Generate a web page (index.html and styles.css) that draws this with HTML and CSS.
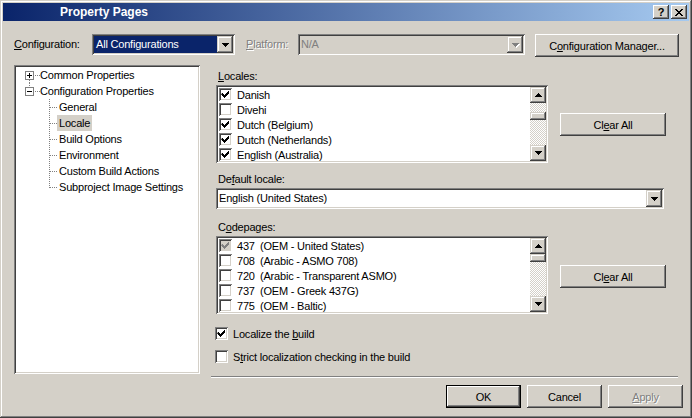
FILE: index.html
```html
<!DOCTYPE html>
<html>
<head>
  <title>Property Pages</title>
  <meta charset="utf-8">
  <link rel="stylesheet" href="styles.css">
</head>
<body>
  <svg width="0" height="0" class="defs">
    <symbol id="chk" viewBox="0 0 13 13"><path d="M3 5h1v1h1v1h1v-1h1v-1h1v-1h1v-1h1v3h-1v1h-1v1h-1v1h-1v1h-1v-1h-1v-1h-1v-1h-1z"/></symbol>
    <symbol id="up" viewBox="0 0 7 4"><path d="M3 0h1v1h-1zM2 1h3v1h-3zM1 2h5v1h-5zM0 3h7v1h-7z"/></symbol>
    <symbol id="down" viewBox="0 0 7 4"><path d="M0 0h7v1h-7zM1 1h5v1h-5zM2 2h3v1h-3zM3 3h1v1h-1z"/></symbol>
  </svg>

  <div class="window">
    <div class="titlebar">
      <span class="title">Property Pages</span>
      <span class="cap-btns">
        <span class="cap-btn help">?</span>
        <span class="cap-btn"><svg width="8" height="7"><path d="M0 0h2v1h-2zM6 0h2v1h-2zM1 1h2v1h-2zM5 1h2v1h-2zM2 2h4v1h-4zM3 3h2v1h-2zM2 4h4v1h-4zM1 5h2v1h-2zM5 5h2v1h-2zM0 6h2v1h-2zM6 6h2v1h-2z"/></svg></span>
      </span>
    </div>

    <div class="config-row">
      <span class="lbl cfg-lbl"><u>C</u>onfiguration:</span>
      <div class="combo cfg-combo">
        <span class="combo-text selected">All Configurations</span>
        <span class="drop"><svg width="7" height="4"><use href="#down"/></svg></span>
      </div>
      <span class="lbl plat-lbl disabled"><u>P</u>latform:</span>
      <div class="combo plat-combo off">
        <span class="combo-text">N/A</span>
        <span class="drop"><svg width="7" height="4"><use href="#down"/></svg></span>
      </div>
      <button class="btn cfg-mgr">C<u>o</u>nfiguration Manager...</button>
    </div>

    <div class="main">
      <div class="tree">
        <div class="node">
          <svg class="gut" width="24" height="16">
            <path class="dots" d="M13.5 13v3M19 8.5h5"/>
            <rect x="9.5" y="4.5" width="8" height="8" fill="#fff" stroke="#808080"/>
            <path d="M11 8.5h5M13.5 6v5" stroke="#000"/>
          </svg>
          <span class="node-text">Common Properties</span>
        </div>
        <div class="node">
          <svg class="gut" width="24" height="16">
            <path class="dots" d="M13.5 0v4M19 8.5h5"/>
            <rect x="9.5" y="4.5" width="8" height="8" fill="#fff" stroke="#808080"/>
            <path d="M11 8.5h5" stroke="#000"/>
          </svg>
          <span class="node-text">Configuration Properties</span>
        </div>
        <div class="node">
          <svg class="gut" width="41" height="16"><path class="dots" d="M33.5 0v16M34 8.5h7"/></svg>
          <span class="node-text child">General</span>
        </div>
        <div class="node">
          <svg class="gut" width="41" height="16"><path class="dots" d="M33.5 0v16M34 8.5h7"/></svg>
          <span class="node-text child current">Locale</span>
        </div>
        <div class="node">
          <svg class="gut" width="41" height="16"><path class="dots" d="M33.5 0v16M34 8.5h7"/></svg>
          <span class="node-text child">Build Options</span>
        </div>
        <div class="node">
          <svg class="gut" width="41" height="16"><path class="dots" d="M33.5 0v16M34 8.5h7"/></svg>
          <span class="node-text child">Environment</span>
        </div>
        <div class="node">
          <svg class="gut" width="41" height="16"><path class="dots" d="M33.5 0v16M34 8.5h7"/></svg>
          <span class="node-text child">Custom Build Actions</span>
        </div>
        <div class="node">
          <svg class="gut" width="41" height="16"><path class="dots" d="M33.5 0v9M34 8.5h7"/></svg>
          <span class="node-text child">Subproject Image Settings</span>
        </div>
      </div>

      <div class="page">
        <div class="field-label first"><u>L</u>ocales:</div>
        <div class="list-row">
          <div class="listbox">
            <div class="rows">
              <div class="item"><span class="cb"><svg width="13" height="13"><use href="#chk"/></svg></span><span class="item-text">Danish</span></div>
              <div class="item"><span class="cb"></span><span class="item-text">Divehi</span></div>
              <div class="item"><span class="cb"><svg width="13" height="13"><use href="#chk"/></svg></span><span class="item-text">Dutch (Belgium)</span></div>
              <div class="item"><span class="cb"><svg width="13" height="13"><use href="#chk"/></svg></span><span class="item-text">Dutch (Netherlands)</span></div>
              <div class="item"><span class="cb"><svg width="13" height="13"><use href="#chk"/></svg></span><span class="item-text">English (Australia)</span></div>
            </div>
            <div class="vscroll">
              <span class="sbtn"><svg width="7" height="4"><use href="#up"/></svg></span>
              <span class="track"><span class="thumb locales-thumb"></span></span>
              <span class="sbtn"><svg width="7" height="4"><use href="#down"/></svg></span>
            </div>
          </div>
          <button class="btn clear locales-clear">Cl<u>e</u>ar All</button>
        </div>

        <div class="field-label">De<u>f</u>ault locale:</div>
        <div class="combo locale-combo">
          <span class="combo-text">English (United States)</span>
          <span class="drop"><svg width="7" height="4"><use href="#down"/></svg></span>
        </div>

        <div class="field-label cp-label">C<u>o</u>depages:</div>
        <div class="list-row">
          <div class="listbox">
            <div class="rows">
              <div class="item"><span class="cb off"><svg width="13" height="13"><use href="#chk"/></svg></span><span class="num">437</span><span>(OEM - United States)</span></div>
              <div class="item"><span class="cb"></span><span class="num">708</span><span>(Arabic - ASMO 708)</span></div>
              <div class="item"><span class="cb"></span><span class="num">720</span><span>(Arabic - Transparent ASMO)</span></div>
              <div class="item"><span class="cb"></span><span class="num">737</span><span>(OEM - Greek 437G)</span></div>
              <div class="item"><span class="cb"></span><span class="num">775</span><span>(OEM - Baltic)</span></div>
            </div>
            <div class="vscroll">
              <span class="sbtn"><svg width="7" height="4"><use href="#up"/></svg></span>
              <span class="track"><span class="thumb"></span></span>
              <span class="sbtn"><svg width="7" height="4"><use href="#down"/></svg></span>
            </div>
          </div>
          <button class="btn clear cp-clear">Cl<u>e</u>ar All</button>
        </div>

        <div class="opt first-opt">
          <span class="cb"><svg width="13" height="13"><use href="#chk"/></svg></span>
          <span class="opt-text">Localize the <u>b</u>uild</span>
        </div>
        <div class="opt">
          <span class="cb"></span>
          <span class="opt-text">S<u>t</u>rict localization checking in the build</span>
        </div>
      </div>
    </div>

    <div class="actions">
      <button class="btn dlg default">OK</button>
      <button class="btn dlg">Cancel</button>
      <button class="btn dlg disabled"><u>A</u>pply</button>
    </div>
  </div>
</body>
</html>
```

FILE: styles.css
```css
* {
  box-sizing: border-box;
}

html,
body {
  margin: 0;
  background: #d4d0c8;
}

body {
  font-family: "Liberation Sans", Arial, sans-serif;
  font-size: 11px;
  letter-spacing: -0.2px;
  color: #000;
}

.defs {
  position: absolute;
}

u {
  text-decoration: underline;
  text-underline-offset: 1px;
}

.window {
  width: 692px;
  height: 418px;
  padding: 3px;
  background: #d4d0c8;
  box-shadow: inset -1px -1px #404040, inset 1px 1px #d4d0c8, inset -2px -2px #808080, inset 2px 2px #fff;
}

/* title bar */
.titlebar {
  height: 18px;
  display: flex;
  align-items: center;
  padding-left: 57px;
  background: linear-gradient(to right, #0a246a, #a6caf0);
  color: #fff;
}

.title {
  font-weight: bold;
  font-size: 12px;
  letter-spacing: 0;
}

.cap-btns {
  margin-left: auto;
  margin-right: 2px;
  display: flex;
  gap: 2px;
}

.cap-btn {
  width: 16px;
  height: 14px;
  display: flex;
  align-items: center;
  justify-content: center;
  background: #d4d0c8;
  color: #000;
  box-shadow: inset -1px -1px #404040, inset 1px 1px #fff, inset -2px -2px #808080;
}

.cap-btn.help {
  font-weight: bold;
  font-size: 11px;
  line-height: 14px;
}

.cap-btn svg {
  display: block;
}

/* shared controls */
.btn {
  display: block;
  padding: 0;
  border: 0;
  background: #d4d0c8;
  font: inherit;
  letter-spacing: inherit;
  color: #000;
  height: 23px;
  box-shadow: inset -1px -1px #404040, inset 1px 1px #fff, inset -2px -2px #808080, inset 2px 2px #d4d0c8;
}

.btn.default {
  box-shadow: inset 0 0 0 1px #000, inset -2px -2px #404040, inset 2px 2px #fff, inset -3px -3px #808080;
}

.disabled {
  color: #808080;
  text-shadow: 1px 1px #fff;
}

.combo {
  height: 21px;
  padding: 2px;
  display: flex;
  background: #fff;
  box-shadow: inset 1px 1px #808080, inset -1px -1px #fff, inset 2px 2px #404040, inset -2px -2px #d4d0c8;
}

.combo-text {
  flex: 1;
  line-height: 17px;
  padding-left: 1px;
  white-space: nowrap;
}

.combo-text.selected {
  background: #0a246a;
  color: #fff;
  padding-left: 2px;
}

.drop,
.sbtn {
  width: 16px;
  display: flex;
  align-items: center;
  justify-content: center;
  background: #d4d0c8;
  box-shadow: inset -1px -1px #404040, inset 1px 1px #d4d0c8, inset -2px -2px #808080, inset 2px 2px #fff;
}

.drop svg,
.sbtn svg {
  display: block;
  fill: #000;
}

.combo.off {
  background: #d4d0c8;
}

.combo.off .combo-text {
  color: #808080;
}

.combo.off .drop svg {
  fill: #808080;
  filter: drop-shadow(1px 1px 0 #fff);
}

/* configuration row */
.config-row {
  display: flex;
  align-items: flex-start;
  margin-top: 13px;
  padding-left: 11px;
}

.lbl {
  line-height: 21px;
  white-space: nowrap;
}

.cfg-lbl {
  width: 78px;
}

.cfg-combo {
  width: 143px;
}

.plat-lbl {
  margin-left: 11px;
  width: 52px;
}

.plat-combo {
  width: 227px;
}

.cfg-mgr {
  margin-left: 10px;
  width: 144px;
}

/* tree + page */
.main {
  display: flex;
  align-items: flex-start;
  height: 312px;
  margin-top: 8px;
  padding-left: 11px;
}

.tree {
  width: 186px;
  height: 309px;
  padding: 2px;
  background: #fff;
  box-shadow: inset 1px 1px #808080, inset -1px -1px #fff, inset 2px 2px #404040, inset -2px -2px #d4d0c8;
}

.node {
  height: 16px;
  display: flex;
  align-items: center;
}

.gut {
  display: block;
  flex-shrink: 0;
}

.dots {
  fill: none;
  stroke: #808080;
  stroke-dasharray: 1 1;
}

.node-text {
  line-height: 16px;
  white-space: nowrap;
}

.node-text.child {
  padding: 0 2px;
}

.node-text.current {
  background: #d4d0c8;
}

.page {
  width: 467px;
  height: 312px;
  margin-left: 11px;
  padding-left: 5px;
  border-bottom: 1px solid #808080;
  box-shadow: 0 1px 0 #fff;
}

.field-label {
  line-height: 13px;
  margin-top: 10px;
  margin-bottom: 2px;
  padding-left: 2px;
}

.field-label.first {
  margin-top: 5px;
}

.field-label.cp-label {
  margin-top: 12px;
}

.list-row {
  display: flex;
  align-items: flex-start;
}

.listbox {
  width: 332px;
  height: 78px;
  padding: 2px;
  display: flex;
  background: #fff;
  box-shadow: inset 1px 1px #808080, inset -1px -1px #fff, inset 2px 2px #404040, inset -2px -2px #d4d0c8;
}

.rows {
  flex: 1;
  overflow: hidden;
}

.item {
  height: 15px;
  display: flex;
  align-items: center;
  white-space: nowrap;
}

.cb {
  width: 13px;
  height: 13px;
  flex-shrink: 0;
  background: #fff;
  box-shadow: inset 1px 1px #808080, inset -1px -1px #fff, inset 2px 2px #404040, inset -2px -2px #d4d0c8;
}

.cb svg {
  display: block;
  fill: #000;
}

.cb.off {
  background: #d4d0c8;
}

.cb.off svg {
  fill: #808080;
}

.item .cb {
  margin-left: 1px;
  margin-right: 5px;
}

.num {
  width: 23px;
}

.vscroll {
  width: 16px;
  display: flex;
  flex-direction: column;
}

.sbtn {
  height: 16px;
}

.track {
  flex: 1;
  background: repeating-conic-gradient(#d4d0c8 0 25%, #fff 0 50%) 0 0 / 2px 2px;
}

.thumb {
  display: block;
  height: 8px;
  background: #d4d0c8;
  box-shadow: inset -1px -1px #404040, inset 1px 1px #d4d0c8, inset -2px -2px #808080, inset 2px 2px #fff;
}

.locales-thumb {
  margin-top: 9px;
}

.clear {
  width: 106px;
  margin-left: 12px;
}

.locales-clear {
  margin-top: 28px;
}

.cp-clear {
  margin-top: 29px;
}

.locale-combo {
  width: 448px;
}

.opt {
  display: flex;
  align-items: center;
  height: 13px;
  margin-top: 10px;
  margin-left: -1px;
}

.opt.first-opt {
  margin-top: 13px;
}

.opt-text {
  margin-left: 5px;
  white-space: nowrap;
}

/* dialog buttons */
.actions {
  display: flex;
  justify-content: flex-end;
  gap: 6px;
  margin-top: 8px;
  padding-right: 6px;
}

.dlg {
  width: 75px;
}
```
